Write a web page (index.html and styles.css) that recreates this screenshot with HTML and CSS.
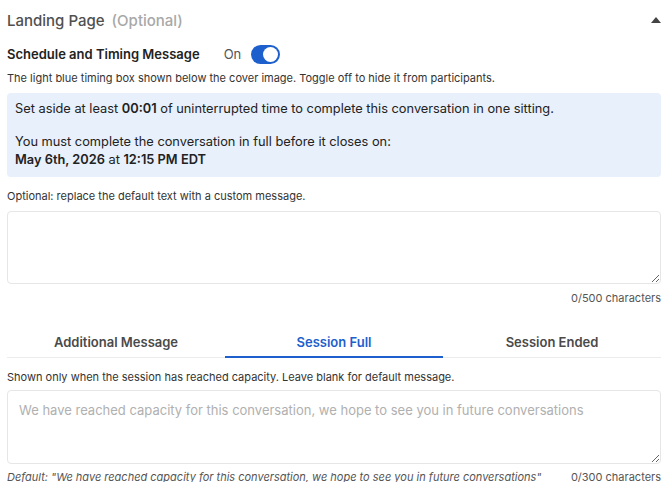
FILE: index.html
```html
<!DOCTYPE html>
<html lang="en">
<head>
  <meta charset="UTF-8">
  <title>Landing Page</title>
  <link rel="stylesheet" href="styles.css">
</head>
<body>
<div class="panel">
  <div class="section-head">
    <h2>Landing Page <span class="muted">(Optional)</span></h2>
    <span class="caret"></span>
  </div>

  <div class="toggle-row">
    <span class="toggle-label">Schedule and Timing Message</span>
    <span class="toggle-state">On</span>
    <span class="switch"><span class="knob"></span></span>
  </div>
  <p class="hint">The light blue timing box shown below the cover image. Toggle off to hide it from participants.</p>

  <div class="timing-box">
    <p>Set aside at least <b>00:01</b> of uninterrupted time to complete this conversation in one sitting.</p>
    <p class="gap">You must complete the conversation in full before it closes on:<br><b>May 6th, 2026</b> at <b>12:15 PM EDT</b></p>
  </div>

  <p class="hint">Optional: replace the default text with a custom message.</p>
  <textarea class="field"></textarea>
  <div class="counter">0/500 characters</div>

  <div class="tabs">
    <div class="tab">Additional Message</div>
    <div class="tab active">Session Full</div>
    <div class="tab">Session Ended</div>
  </div>

  <p class="hint">Shown only when the session has reached capacity. Leave blank for default message.</p>
  <textarea class="field" placeholder="We have reached capacity for this conversation, we hope to see you in future conversations"></textarea>
  <div class="foot">
    <span class="default">Default: "We have reached capacity for this conversation, we hope to see you in future conversations"</span>
    <span class="count">0/300 characters</span>
  </div>
</div>
</body>
</html>
```

FILE: styles.css
```css
* {
  margin: 0;
  padding: 0;
  box-sizing: border-box;
}
html,body {
  background: #fff;
}
body {
  font-family: Inter, "Noto Sans", sans-serif;
  color: #2a2a2a;
}

.panel {
  height: 482px;
  overflow: hidden;
  padding: 8px 9px 0 7px;
}

.section-head {
  display: flex;
  align-items: center;
  justify-content: space-between;
  height: 24px;
}
.section-head h2 {
  font-size: 15px;
  font-weight: 500;
  color: #505050;
}
.section-head .muted {
  color: #a8a8a8;
  margin-left: 3px;
}
.caret {
  width: 0;
  height: 0;
  border-left: 5px solid transparent;
  border-right: 5px solid transparent;
  border-bottom: 6px solid #444;
}

.toggle-row {
  display: flex;
  align-items: center;
  margin-top: 10px;
  height: 24px;
}
.toggle-label {
  font-size: 13px;
  font-weight: 600;
  color: #222;
}
.toggle-state {
  font-size: 13px;
  color: #555;
  margin-left: 24px;
}
.switch {
  width: 29px;
  height: 19px;
  border-radius: 10px;
  background: #1d5fcc;
  margin-left: 10px;
  display: flex;
  align-items: center;
  justify-content: flex-end;
  padding-right: 2px;
}
.knob {
  width: 15px;
  height: 15px;
  border-radius: 50%;
  background: #fff;
}

.hint {
  font-size: 11px;
  color: #333;
  margin-top: 5px;
  line-height: 14px;
}

.timing-box {
  background: #e7f0fb;
  border-radius: 4px;
  padding: 7px 8px 8px;
  margin-top: 8px;
  font-size: 12.8px;
  line-height: 18px;
  color: #222;
}
.timing-box b {
  font-weight: 600;
}
.timing-box .gap {
  margin-top: 15px;
}

.timing-box + .hint {
  margin-top: 12px;
}

.field {
  display: block;
  width: 100%;
  height: 73px;
  margin-top: 8px;
  border: 1px solid #e6e6e6;
  border-radius: 4px;
  padding: 11px 11px;
  font-family: Inter, "Noto Sans", sans-serif;
  font-size: 13px;
  line-height: 16px;
  color: #222;
  resize: vertical;
  outline: none;
}
.field::placeholder {
  color: #b0b0b0;
}

.counter {
  text-align: right;
  font-size: 11px;
  color: #555;
  margin-top: 7px;
  line-height: 14px;
}

.tabs {
  display: flex;
  margin-top: 27px;
  border-bottom: 1px solid #ececec;
}
.tab {
  flex: 1;
  text-align: center;
  font-size: 13px;
  line-height: 16px;
  font-weight: 600;
  color: #4a4a4a;
  padding: 2px 0 6px;
  border-bottom: 2px solid transparent;
  margin-bottom: -1px;
}
.tab.active {
  color: #1d5fcc;
  border-bottom-color: #1d5fcc;
}

.tabs + .hint {
  margin-top: 12px;
}
.tabs + .hint + .field {
  margin-top: 6px;
  height: 74px;
}

.foot {
  display: flex;
  justify-content: space-between;
  font-size: 11px;
  color: #555;
  margin-top: 6px;
  line-height: 14px;
}
.foot .default {
  font-style: italic;
}
```
